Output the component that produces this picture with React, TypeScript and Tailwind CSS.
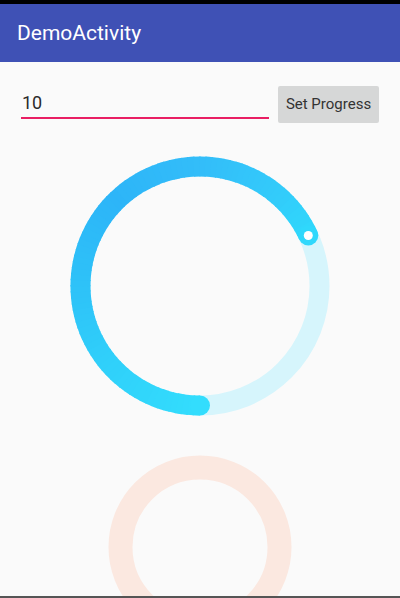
import React from 'react';

// sweep colour stops along the progress arc (degrees from 6 o'clock, clockwise)
const STOPS: [number, string][] = [
  [0, '#33ddfd'],
  [50, '#30d0fa'],
  [90, '#2ec2f8'],
  [135, '#2db5f8'],
  [180, '#33bdf9'],
  [220, '#33cbfa'],
  [245, '#2fd8fc'],
];

const hexToRgb = (h: string) => [1, 3, 5].map((i) => parseInt(h.slice(i, i + 2), 16));

const colorAt = (a: number) => {
  for (let i = 0; i < STOPS.length - 1; i++) {
    const [a0, c0] = STOPS[i];
    const [a1, c1] = STOPS[i + 1];
    if (a <= a1) {
      const t = (a - a0) / (a1 - a0);
      const p = hexToRgb(c0);
      const q = hexToRgb(c1);
      const m = p.map((v, k) => Math.round(v + (q[k] - v) * t));
      return `rgb(${m[0]},${m[1]},${m[2]})`;
    }
  }
  return STOPS[STOPS.length - 1][1];
};

function RingProgress({ progress }: { progress: number }) {
  const size = 262;
  const c = size / 2;
  const r = 119.5;
  const stroke = 20;
  const sweep = progress;
  const pt = (a: number) => {
    const rad = (a * Math.PI) / 180;
    return [c - r * Math.sin(rad), c + r * Math.cos(rad)];
  };
  const segs = 90;
  const step = sweep / segs;
  const end = pt(sweep);
  const start = pt(0);

  return (
    <svg width={size} height={size} viewBox={`0 0 ${size} ${size}`} className="mx-auto block">
      <circle cx={c} cy={c} r={r} fill="none" stroke="#d6f5fc" strokeWidth={stroke} />
      {Array.from({ length: segs }).map((_, i) => {
        const a0 = i * step;
        const a1 = Math.min(sweep, (i + 1) * step + 0.6);
        const [x0, y0] = pt(a0);
        const [x1, y1] = pt(a1);
        return (
          <path
            key={i}
            d={`M ${x0} ${y0} A ${r} ${r} 0 0 1 ${x1} ${y1}`}
            fill="none"
            stroke={colorAt(a0 + step / 2)}
            strokeWidth={stroke}
          />
        );
      })}
      <circle cx={start[0]} cy={start[1]} r={stroke / 2} fill={colorAt(0)} />
      <circle cx={end[0]} cy={end[1]} r={stroke / 2} fill={colorAt(sweep)} />
      <circle cx={end[0]} cy={end[1]} r={4.5} fill="#ffffff" />
    </svg>
  );
}

export default function App() {
  return (
    <div className="h-[598px] w-[400px] flex flex-col bg-[#fafafa] overflow-hidden" style={{ fontFamily: 'Roboto, "Noto Sans", sans-serif' }}>
      <div className="h-[4px] bg-black shrink-0" />
      <header className="h-[58px] shrink-0 bg-[#3f51b5] flex items-center px-[17px]">
        <h1 className="text-[21px] text-white leading-none pt-[1px]">DemoActivity</h1>
      </header>

      <main className="flex-1 overflow-hidden">
        <div className="flex items-start pl-[21px] pr-[21px] pt-[24px]">
          <div className="w-[248px] h-[33px] border-b-2 border-[#e91e63] flex items-end pb-[5px]">
            <span className="text-[18px] text-[#2a2a2a] leading-none pl-[1px]">10</span>
          </div>
          <button className="ml-auto w-[101px] h-[37px] bg-[#d6d7d7] text-[15px] text-[#333] rounded-[2px]">
            Set Progress
          </button>
        </div>

        <div className="mt-[32px]">
          <RingProgress progress={245} />
        </div>

        <div className="mt-[38px]">
          <svg width={184} height={184} viewBox="0 0 184 184" className="mx-auto block">
            <circle cx={92} cy={92} r={79.5} fill="none" stroke="#fbe8e0" strokeWidth={24} />
          </svg>
        </div>
      </main>

      <div className="h-[2px] bg-[#555] shrink-0" />
    </div>
  );
}
